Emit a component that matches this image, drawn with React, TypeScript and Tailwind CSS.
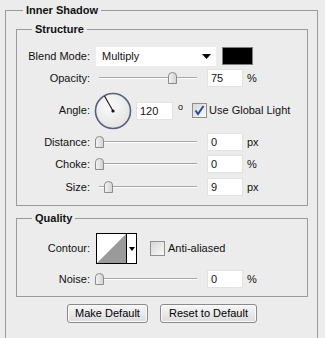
import React from 'react';

const labelCls = 'w-[73px] shrink-0 text-right';

function Slider({ pos }: { pos: number }) {
  return (
    <div className="relative ml-[3px] h-[18px] w-[98px] shrink-0">
      <div className="absolute left-0 right-0 top-[8px] h-px bg-[#a6a6a6]" />
      <div className="absolute left-0 right-0 top-[9px] h-px bg-white" />
      <svg className="absolute top-[3px]" style={{ left: pos - 4 }} width="9" height="12" viewBox="0 0 9 12">
        <defs>
          <linearGradient id="thumb" x1="0" y1="0" x2="1" y2="0">
            <stop offset="0" stopColor="#f4f4f4" />
            <stop offset="1" stopColor="#d2d2d2" />
          </linearGradient>
        </defs>
        <path d="M0.5 11.5 V4 Q0.5 0.5 4.5 0.5 Q8.5 0.5 8.5 4 V11.5 Z" fill="url(#thumb)" stroke="#8c8c8c" />
      </svg>
    </div>
  );
}

function NumBox({ value, w = 'w-[36px]' }: { value: string; w?: string }) {
  return (
    <div className={`${w} h-[18px] shrink-0 bg-white border border-[#e2e2e2] pl-[3px] leading-[16px]`}>{value}</div>
  );
}

function SliderRow({ label, pos, value, unit, mt }: { label: string; pos: number; value: string; unit: string; mt: string }) {
  return (
    <div className={`flex h-[18px] items-center ${mt}`}>
      <div className={labelCls}>{label}</div>
      <div className="ml-[6px] flex items-center">
        <Slider pos={pos} />
        <div className="ml-[10px]"><NumBox value={value} /></div>
        <span className="ml-[4px]">{unit}</span>
      </div>
    </div>
  );
}

function CheckBox({ checked }: { checked: boolean }) {
  return (
    <svg width="15" height="15" viewBox="0 0 15 15" className="shrink-0">
      <defs>
        <linearGradient id="cb" x1="0" y1="0" x2="1" y2="1">
          <stop offset="0" stopColor="#d6d6d6" />
          <stop offset="1" stopColor="#fafafa" />
        </linearGradient>
      </defs>
      <rect x="0.5" y="0.5" width="14" height="14" fill="url(#cb)" stroke="#8e8f8f" />
      {checked && <path d="M3.5 7.5 L6 11 L11.5 3" fill="none" stroke="#2c4a9c" strokeWidth="2" />}
    </svg>
  );
}

function Dial() {
  return (
    <svg width="38" height="38" viewBox="0 0 38 38" className="-ml-[2px] shrink-0">
      <defs>
        <radialGradient id="dial" cx="0.4" cy="0.35" r="0.7">
          <stop offset="0" stopColor="#fbfbfb" />
          <stop offset="1" stopColor="#e2e2e2" />
        </radialGradient>
      </defs>
      <circle cx="19" cy="19" r="17.5" fill="url(#dial)" stroke="#56617e" strokeWidth="1.6" />
      <line x1="19" y1="19" x2="10.5" y2="4" stroke="#111" strokeWidth="1.1" />
      <circle cx="19" cy="19" r="1.6" fill="#111" />
    </svg>
  );
}

function Contour() {
  return (
    <div className="flex h-[31px] w-[41px] shrink-0 border border-black bg-white">
      <svg width="29" height="29" viewBox="0 0 29 29" className="shrink-0">
        <path d="M0 29 L29 0 L29 29 Z" fill="#9a9a9a" />
      </svg>
      <div className="flex flex-1 items-center justify-center border-l border-black">
        <svg width="6" height="4" viewBox="0 0 6 4">
          <path d="M0 0 H6 L3 4 Z" fill="#000" />
        </svg>
      </div>
    </div>
  );
}

function Button({ children, w }: { children: React.ReactNode; w: string }) {
  return (
    <button className={`${w} h-[19px] rounded-[3px] border border-[#8a8a8a] bg-gradient-to-b from-[#f7f7f7] to-[#dcdcdc] text-[11px] leading-[17px] text-black shadow-[inset_0_0_0_1px_#fbfbfb]`}>
      {children}
    </button>
  );
}

export default function App() {
  return (
    <div className="h-[338px] w-[325px] overflow-hidden bg-[#ececec] font-['Liberation_Sans',Arial,sans-serif] text-[11px] text-[#111]">
      <fieldset className="ml-[5px] mt-[3px] w-[313px] border border-[#9a9a9a] pl-[10px] pr-[9px] pt-[5px] pb-[40px]">
        <legend className="ml-[7px] px-[3px] text-[11px] font-bold leading-[14px]">Inner Shadow</legend>

        <fieldset className="w-[292px] border border-[#9a9a9a] pb-[9px]">
          <legend className="ml-[15px] px-[3px] font-bold leading-[14px]">Structure</legend>

          <div className="mt-[10px] flex h-[20px] items-center">
            <div className={labelCls}>Blend Mode:</div>
            <div className="ml-[6px] flex h-[19px] w-[120px] items-center justify-between bg-white pl-[6px] pr-[5px]">
              <span>Multiply</span>
              <svg width="9" height="5" viewBox="0 0 9 5">
                <path d="M0 0 H9 L4.5 5 Z" fill="#000" />
              </svg>
            </div>
            <div className="ml-[6px] h-[18px] w-[31px] border border-[#7c7c7c] bg-black" />
          </div>

          <SliderRow label="Opacity:" pos={73} value="75" unit="%" mt="mt-[3px]" />

          <div className="mt-[5px] flex h-[37px] items-center">
            <div className={labelCls}>Angle:</div>
            <div className="ml-[6px] flex items-center">
              <Dial />
              <div className="ml-[4px]"><NumBox value="120" w="w-[37px]" /></div>
              <span className="ml-[5px] -mt-[5px] text-[9px]">o</span>
              <div className="ml-[9px] flex items-center gap-[2px]">
                <CheckBox checked />
                <span>Use Global Light</span>
              </div>
            </div>
          </div>

          <SliderRow label="Distance:" pos={0} value="0" unit="px" mt="mt-[4px]" />
          <SliderRow label="Choke:" pos={0} value="0" unit="%" mt="mt-[4px]" />
          <SliderRow label="Size:" pos={9} value="9" unit="px" mt="mt-[5px]" />
        </fieldset>

        <fieldset className="mt-[5px] w-[292px] border border-[#9a9a9a] pb-[8px]">
          <legend className="ml-[15px] px-[3px] font-bold leading-[14px]">Quality</legend>

          <div className="mt-[8px] flex h-[31px] items-center">
            <div className={labelCls}>Contour:</div>
            <div className="ml-[6px] flex items-center">
              <Contour />
              <div className="ml-[13px] flex items-center gap-[3px]">
                <CheckBox checked={false} />
                <span>Anti-aliased</span>
              </div>
            </div>
          </div>

          <SliderRow label="Noise:" pos={0} value="0" unit="%" mt="mt-[6px]" />
        </fieldset>

        <div className="mt-[7px] flex justify-center gap-[12px]">
          <Button w="w-[81px]">Make Default</Button>
          <Button w="w-[97px]">Reset to Default</Button>
        </div>
      </fieldset>
    </div>
  );
}
